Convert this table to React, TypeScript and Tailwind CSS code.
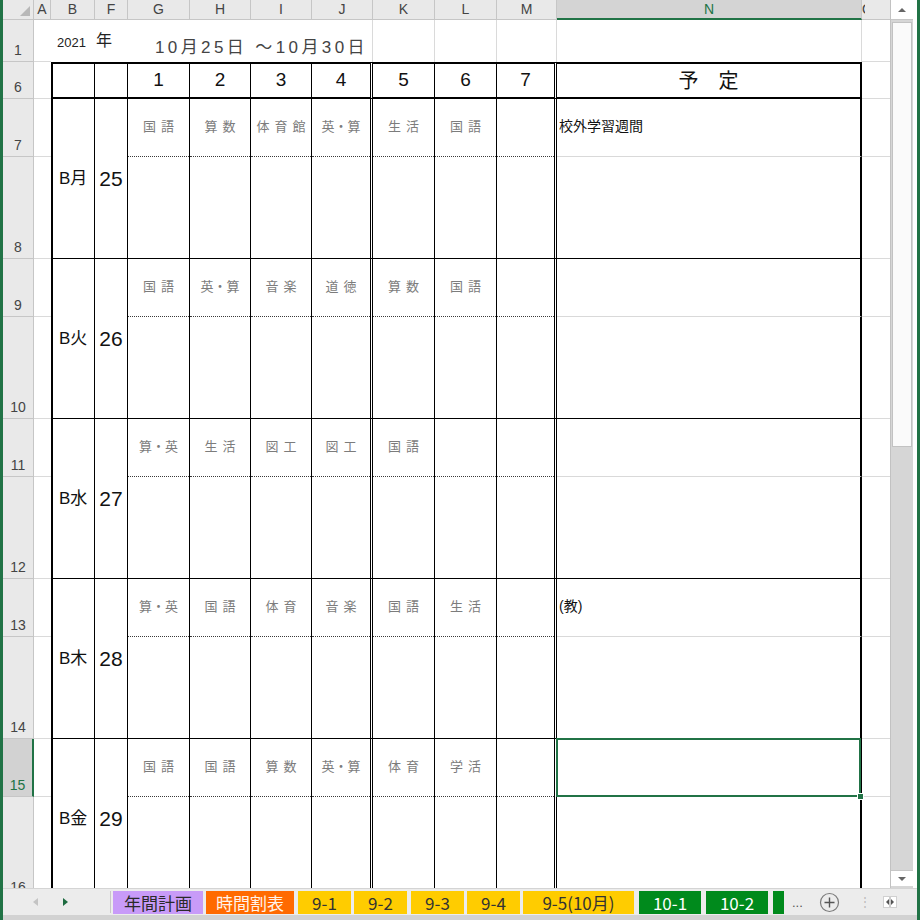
import React from 'react';

type Day = { wd: string; date: string; subjects: string[]; note: string };

const days: Day[] = [
  { wd: 'B月', date: '25', subjects: ['国語', '算数', '体育館', '英・算', '生活', '国語', ''], note: '校外学習週間' },
  { wd: 'B火', date: '26', subjects: ['国語', '英・算', '音楽', '道徳', '算数', '国語', ''], note: '' },
  { wd: 'B水', date: '27', subjects: ['算・英', '生活', '図工', '図工', '国語', '', ''], note: '' },
  { wd: 'B木', date: '28', subjects: ['算・英', '国語', '体育', '音楽', '国語', '生活', ''], note: '(教)' },
  { wd: 'B金', date: '29', subjects: ['国語', '国語', '算数', '英・算', '体育', '学活', ''], note: '' },
];

const letters = ['A', 'B', 'F', 'G', 'H', 'I', 'J', 'K', 'L', 'M', 'N'];

// right edges of period columns G..M (J and M get double rules)
const periodBorder = [
  'border-r border-r-black',
  'border-r border-r-black',
  'border-r border-r-black',
  'border-r-[3px] border-double border-r-black',
  'border-r border-r-black',
  'border-r border-r-black',
  'border-r-[3px] border-double border-r-black',
];

const RowHead = ({ n, active }: { n: number; active?: boolean }) => (
  <div
    className={
      active
        ? 'flex items-end justify-center bg-[#d2d2d2] border-b border-b-[#c6c6c6] border-r-2 border-r-[#217346] text-[14px] leading-none pb-[4px] text-[#217346]'
        : 'flex items-end justify-center bg-[#e9e9e9] border-b border-r border-[#c6c6c6] text-[14px] leading-none pb-[4px] text-[#444]'
    }
  >
    {n}
  </div>
);

const Grid = () => {
  const rowNums = [7, 9, 11, 13, 15];
  return (
    <div className="grid grid-cols-[31px_17px_44px_33px_62px_61px_61px_61px_62px_62px_60px_305px_28px] grid-rows-[20px_42px_37px_58px_102px_58px_102px_58px_102px_58px_102px_58px_102px]">
      {/* column headers */}
      <div className="relative bg-[#e9e9e9] border-r border-b border-[#c6c6c6]">
        <div className="absolute right-[3px] bottom-[3px] w-0 h-0 border-l-[10px] border-l-transparent border-b-[10px] border-b-[#b8b8b8]" />
      </div>
      {letters.map((l) => (
        <div
          key={l}
          className={
            l === 'N'
              ? 'flex items-center justify-center bg-[#d4d4d4] border-r border-r-[#c6c6c6] border-b-2 border-b-[#217346] text-[14px] text-[#217346]'
              : 'flex items-center justify-center bg-[#e9e9e9] border-r border-b border-[#c6c6c6] text-[14px] text-[#444]'
          }
        >
          {l}
        </div>
      ))}
      <div className="bg-[#e9e9e9] border-b border-[#c6c6c6] overflow-hidden flex items-center">
        <span className="w-[3px] overflow-hidden text-[14px] text-[#444]">O</span>
      </div>

      {/* row 1 */}
      <RowHead n={1} />
      <div className="border-b border-[#dadada]" />
      <div className="flex items-end pb-[10px] pl-[6px] text-[13px] text-[#222]">2021</div>
      <div className="flex items-end pb-[9px] pl-[1px] text-[16px] text-[#222]">年</div>
      <div className="relative">
        <span className="absolute left-[27px] bottom-[2px] whitespace-nowrap text-[17px] tracking-[3.4px] text-[#444]">
          10月25日 ～10月30日
        </span>
      </div>
      <div />
      <div />
      <div className="border-r border-[#dadada]" />
      <div className="border-r border-[#dadada]" />
      <div className="border-r border-[#dadada]" />
      <div className="border-r border-[#dadada]" />
      <div className="border-r border-[#dadada]" />
      <div className="border-b border-[#dadada]" />

      {/* row 6: table head */}
      <RowHead n={6} />
      <div className="border-b border-[#dadada]" />
      <div className="border-l-2 border-t-2 border-b-2 border-r border-black" />
      <div className="border-t-2 border-b-2 border-r border-black" />
      {[1, 2, 3, 4, 5, 6, 7].map((p, i) => (
        <div
          key={p}
          className={`flex items-center justify-center border-t-2 border-t-black border-b-2 border-b-black text-[19px] text-[#111] ${periodBorder[i]}`}
        >
          {p}
        </div>
      ))}
      <div className="flex items-center justify-center border-t-2 border-b-2 border-r-2 border-black text-[20px] text-[#111]">
        予　定
      </div>
      <div className="border-b border-[#dadada]" />

      {days.map((d, di) => (
        <React.Fragment key={d.date}>
          <RowHead n={rowNums[di]} active={rowNums[di] === 15} />
          <div className="border-b border-[#dadada]" />
          <div className="row-span-2 flex items-center pl-[6px] border-l-2 border-l-black border-r border-b border-black text-[17px] text-[#111]">
            {d.wd}
          </div>
          <div className="row-span-2 flex items-center justify-center border-r border-b border-black text-[21px] text-[#111]">
            {d.date}
          </div>
          {d.subjects.map((s, i) => (
            <div key={i} className={`flex flex-col ${periodBorder[i]}`}>
              <div
                className={
                  s.includes('・')
                    ? 'flex-1 flex items-center justify-center pb-[2px] whitespace-nowrap text-[13px] tracking-[0px] text-[#7c7c7c]'
                    : 'flex-1 flex items-center justify-center pl-[5px] pb-[2px] whitespace-nowrap text-[13px] tracking-[5px] text-[#7c7c7c]'
                }
              >
                {s}
              </div>
              <div className="h-0 border-t border-dotted border-[#3a3a3a]" />
            </div>
          ))}
          <div className="relative flex items-center pl-[2px] pb-[2px] border-r-2 border-r-black border-b border-b-[#d9d9d9] text-[14px] text-[#111]">
            {d.note}
            {rowNums[di] === 15 && (
              <div className="absolute -left-px -top-px -right-[1px] -bottom-px z-10 border-2 border-[#217346]">
                <div className="absolute -right-[5px] -bottom-[5px] w-[7px] h-[7px] bg-[#217346] border border-white" />
              </div>
            )}
          </div>
          <div className="border-b border-[#dadada]" />

          <RowHead n={rowNums[di] + 1} />
          <div className="border-b border-[#dadada]" />
          {periodBorder.map((b, i) => (
            <div key={i} className={`border-b border-b-black ${b}`} />
          ))}
          <div className="border-r-2 border-b border-black" />
          <div className="border-b border-[#dadada]" />
        </React.Fragment>
      ))}
    </div>
  );
};

const Scrollbar = () => (
  <div className="w-[23px] h-[888px] flex flex-col bg-[#d6d6d6] border-l border-[#c2c2c2]">
    <div className="h-[20px] bg-white border-b border-[#c6c6c6] flex items-center justify-center">
      <div className="w-0 h-0 border-l-[4px] border-r-[4px] border-b-[4px] border-l-transparent border-r-transparent border-b-[#666]" />
    </div>
    <div className="h-[425px] mx-[1px] mt-[2px] bg-[#fafafa] border border-[#c2c2c2]" />
    <div className="flex-1" />
    <div className="h-[16px] mb-[2px] bg-white border-t border-[#c6c6c6] flex items-center justify-center">
      <div className="w-0 h-0 border-l-[4px] border-r-[4px] border-t-[4px] border-l-transparent border-r-transparent border-t-[#666]" />
    </div>
  </div>
);

const tabs = [
  { name: '年間計画', w: 'w-[90px] ml-[2px]', c: 'bg-[#c89bf8] text-[#2a2a2a]' },
  { name: '時間割表', w: 'w-[88px] ml-[3px]', c: 'bg-[#ff6a00] text-[#fff3ea]' },
  { name: '9-1', w: 'w-[53px] ml-[4px]', c: 'bg-[#ffcc00] text-[#333]' },
  { name: '9-2', w: 'w-[53px] ml-[3px]', c: 'bg-[#ffcc00] text-[#333]' },
  { name: '9-3', w: 'w-[53px] ml-[4px]', c: 'bg-[#ffcc00] text-[#333]' },
  { name: '9-4', w: 'w-[53px] ml-[3px]', c: 'bg-[#ffcc00] text-[#333]' },
  { name: '9-5(10月)', w: 'w-[111px] ml-[3px]', c: 'bg-[#ffcc00] text-[#333]' },
  { name: '10-1', w: 'w-[62px] ml-[5px]', c: 'bg-[#008a1c] text-white' },
  { name: '10-2', w: 'w-[62px] ml-[5px]', c: 'bg-[#008a1c] text-white' },
  { name: '', w: 'w-[11px] ml-[5px]', c: 'bg-[#008a1c] text-white' },
];

const TabBar = () => (
  <div className="h-[27px] flex items-center bg-[#ececec] border-t border-[#d4d4d4]">
    <div className="w-[107px] h-full flex items-center">
      <div className="ml-[30px] w-0 h-0 border-t-[4px] border-b-[4px] border-r-[5px] border-t-transparent border-b-transparent border-r-[#c4c4c4]" />
      <div className="ml-[25px] w-0 h-0 border-t-[4px] border-b-[4px] border-l-[5px] border-t-transparent border-b-transparent border-l-[#1d6b40]" />
    </div>
    <div className="w-px h-[22px] bg-[#c8c8c8]" />
    {tabs.map((t, i) => (
      <div
        key={i}
        className={`h-[23px] flex items-center justify-center text-[17px] leading-none [font-family:'Noto_Sans_CJK_JP',sans-serif] ${t.w} ${t.c}`}
      >
        {t.name}
      </div>
    ))}
    <span className="ml-[8px] text-[13px] text-[#555] leading-none">...</span>
    <svg className="ml-[16px]" width="21" height="21" viewBox="0 0 21 21">
      <circle cx="10.5" cy="10.5" r="9" fill="none" stroke="#7a7a7a" strokeWidth="1.2" />
      <path d="M10.5 5.5v10M5.5 10.5h10" stroke="#555" strokeWidth="1.4" />
    </svg>
    <span className="ml-[19px] text-[12px] text-[#bbb] leading-none">⋮</span>
    <svg className="ml-[12px]" width="14" height="14" viewBox="0 0 14 14">
      <rect x="0.5" y="1.5" width="13" height="11" fill="#fff" stroke="#d0d0d0" />
      <path d="M6 4v6L3 7z" fill="#555" />
      <path d="M8 4v6l3-3z" fill="#555" />
      <path d="M7 2v10" stroke="#999" strokeWidth="1" />
    </svg>
  </div>
);

export default function App() {
  return (
    <div className="w-[920px] h-[920px] flex flex-col bg-[#d2d2d2] border-l-[3px] border-r-[3px] border-[#217346] overflow-hidden [font-family:'Liberation_Sans','Noto_Sans_CJK_JP',sans-serif]">
      <div className="flex h-[888px]">
        <div className="w-[887px] h-[888px] overflow-hidden bg-white">
          <Grid />
        </div>
        <Scrollbar />
        <div className="w-[4px] bg-white" />
      </div>
      <TabBar />
    </div>
  );
}
